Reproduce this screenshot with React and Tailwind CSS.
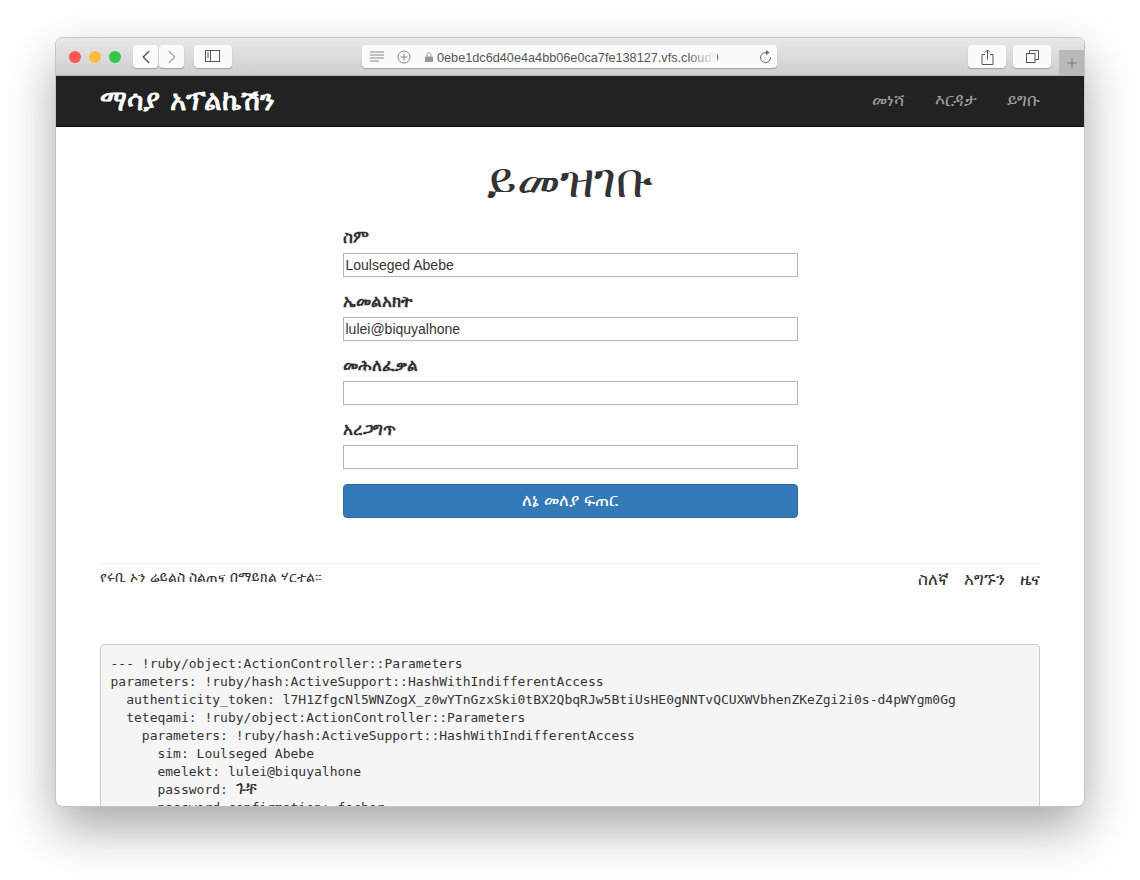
import { ChevronLeft, ChevronRight, Plus } from 'lucide-react';
import React from 'react';

const sans = 'font-["Helvetica_Neue","Liberation_Sans","DejaVu_Sans",sans-serif]';

const yaml = `--- !ruby/object:ActionController::Parameters
parameters: !ruby/hash:ActiveSupport::HashWithIndifferentAccess
  authenticity_token: l7H1ZfgcNl5WNZogX_z0wYTnGzxSki0tBX2QbqRJw5BtiUsHE0gNNTvQCUXWVbhenZKeZgi2i0s-d4pWYgm0Gg
  teteqami: !ruby/object:ActionController::Parameters
    parameters: !ruby/hash:ActiveSupport::HashWithIndifferentAccess
      sim: Loulseged Abebe
      emelekt: lulei@biquyalhone
      password: `;

const fields = [
    { label: 'ስም', value: 'Loulseged Abebe' },
    { label: 'ኤመልአክት', value: 'lulei@biquyalhone' },
    { label: 'መሕለፈቃል', value: '' },
    { label: 'አረጋግጥ', value: '' },
];

const ToolButton = ({ className, children }) => (
    <div className={`h-[23px] bg-[#fbfbfb] rounded-[4px] shadow-[0_1px_1px_rgba(0,0,0,0.25)] flex items-center justify-center ${className}`}>
        {children}
    </div>
);

const Toolbar = () => (
    <div className="relative h-[38px] flex items-center pl-[13px] bg-gradient-to-b from-[#e8e8e8] to-[#cfcfcf] border-b border-[#b4b4b4]">
        <div className="flex gap-2 mr-[12px]">
            <div className="w-3 h-3 rounded-full bg-[#fc5753]"></div>
            <div className="w-3 h-3 rounded-full bg-[#fdbc40]"></div>
            <div className="w-3 h-3 rounded-full bg-[#33c748]"></div>
        </div>
        <div className="flex gap-px mr-[10px]">
            <ToolButton className="w-[25px]"><ChevronLeft size={22} strokeWidth={1.5} className="text-[#555]" /></ToolButton>
            <ToolButton className="w-[25px]"><ChevronRight size={22} strokeWidth={1.5} className="text-[#aaa]" /></ToolButton>
        </div>
        <ToolButton className="w-[38px]">
            <svg width="16" height="13" viewBox="0 0 16 13" fill="none" stroke="#555" strokeWidth="1">
                <rect x="0.5" y="0.5" width="14" height="11" />
                <path d="M5.5 0.5v11M2 3h2M2 5h2M2 7h2" />
            </svg>
        </ToolButton>
        <ToolButton className="w-[415px] ml-[130px] justify-start px-2 relative overflow-hidden">
            <svg width="14" height="11" viewBox="0 0 14 11" stroke="#888" strokeWidth="1" className="shrink-0">
                <path d="M0 1h14M0 4h14M0 7h14M0 10h9" />
            </svg>
            <svg width="14" height="14" viewBox="0 0 14 14" fill="none" stroke="#888" strokeWidth="1" className="shrink-0 ml-[13px]">
                <circle cx="7" cy="7" r="6" />
                <path d="M7 3.5v7M3.5 7h7" />
            </svg>
            <svg width="8" height="10" viewBox="0 0 8 10" className="shrink-0 ml-[14px]">
                <path d="M2 4.5V2.8a2 2 0 0 1 4 0v1.7" fill="none" stroke="#999" strokeWidth="1" />
                <rect x="0" y="4.5" width="8" height="5.5" rx="0.5" fill="#999" />
            </svg>
            <span className={`ml-[4px] pt-[2px] text-[12.7px] leading-[16px] text-[#555] whitespace-nowrap w-[282px] overflow-hidden ${sans}`}>
                0ebe1dc6d40e4a4bb06e0ca7fe138127.vfs.cloud9
            </span>
            <div className="absolute left-[325px] top-0 w-[30px] h-full bg-gradient-to-r from-transparent to-[#fbfbfb]"></div>
            <svg width="13" height="14" viewBox="0 0 13 14" fill="none" className="absolute right-[5px]">
                <path d="M7 2.6A5 5 0 1 0 11.5 7.5" stroke="#666" strokeWidth="1" />
                <path d="M7 0l3.5 2.6L7 5.2z" fill="#666" />
            </svg>
        </ToolButton>
        <ToolButton className="w-[38px] ml-auto mr-[7px]">
            <svg width="13" height="16" viewBox="0 0 13 16" fill="none" stroke="#555" strokeWidth="1">
                <path d="M4 5.5H1v10h11v-10H9M6.5 10.5V1M4 3.5 6.5 1 9 3.5" />
            </svg>
        </ToolButton>
        <ToolButton className="w-[38px] mr-[8px]">
            <svg width="13" height="13" viewBox="0 0 13 13" fill="none" stroke="#555" strokeWidth="1">
                <rect x="0.5" y="3.5" width="8.5" height="9" />
                <path d="M3.5 3.5V0.5h9v9H9" />
            </svg>
        </ToolButton>
        <div className="w-[25px] h-[25px] self-end bg-[#b9b9b9] flex items-center justify-center">
            <Plus size={14} strokeWidth={1} className="text-[#555]" />
        </div>
    </div>
);

const Navbar = () => (
    <div className="h-[51px] bg-[#222] border-b border-[#080808] flex items-center justify-between px-[44px]">
        <span className="text-[28px] font-bold text-white">ማሳያ አፕልኬሽን</span>
        <div className="flex gap-[30px] text-[16.5px] text-[#9d9d9d]">
            <span>መነሻ</span>
            <span>እርዳታ</span>
            <span>ይግቡ</span>
        </div>
    </div>
);

const SignupForm = () => (
    <div className="w-[455px] mx-auto">
        {fields.map((field) => (
            <div key={field.label}>
                <label className="block h-[20px] mb-[5px] text-[16.8px] leading-[18px] font-bold text-[#333]">{field.label}</label>
                <input
                    readOnly
                    value={field.value}
                    className={`block w-full h-[24px] mb-[15px] px-[2px] border border-[#b5b5b5] bg-white text-[14px] text-[#333] outline-none ${sans}`}
                />
            </div>
        ))}
        <div className="h-[34px] bg-[#337ab7] border border-[#2e6da4] rounded-[4px] text-white text-[16.5px] flex items-center justify-center">
            ለኔ መለያ ፍጠር
        </div>
    </div>
);

const App = () => (
    <div className='w-[1140px] h-[880px] bg-white overflow-hidden pl-[56px] pt-[38px] font-["DejaVu_Sans","Noto_Sans",sans-serif] text-[#333]'>
        <div className="w-[1028px] h-[768px] rounded-[6px] overflow-hidden bg-white shadow-[0_22px_50px_rgba(0,0,0,0.35)] outline outline-1 outline-[#c4c4c4]">
            <Toolbar />
            <Navbar />
            <div className="px-[44px]">
                <h1 className="text-[48px] leading-[46px] text-center pt-[30px] pb-[25px] box-content">ይመዝገቡ</h1>
                <SignupForm />
                <div className="mt-[45px] pt-[5px] border-t border-[#eee] flex justify-between items-start">
                    <span className="text-[13.8px] leading-[16px]">የሩቢ ኦን ሬይልስ ስልጠና በማይክል ሃርተል።</span>
                    <div className="flex gap-[15px] text-[17px] leading-[20px]">
                        <span>ስለኛ</span>
                        <span>አግኙን</span>
                        <span>ዜና</span>
                    </div>
                </div>
                <pre className='mt-[55px] p-[9.5px] bg-[#f5f5f5] border border-[#ccc] rounded-[4px] text-[13px] leading-[18px] text-[#333] font-["DejaVu_Sans_Mono",monospace]'>{yaml}<span className='text-[16px] leading-none font-["DejaVu_Sans",sans-serif]'>ጉቸ</span>{'\n      password_confirmation: fecher'}</pre>
            </div>
        </div>
    </div>
);

export default App;
